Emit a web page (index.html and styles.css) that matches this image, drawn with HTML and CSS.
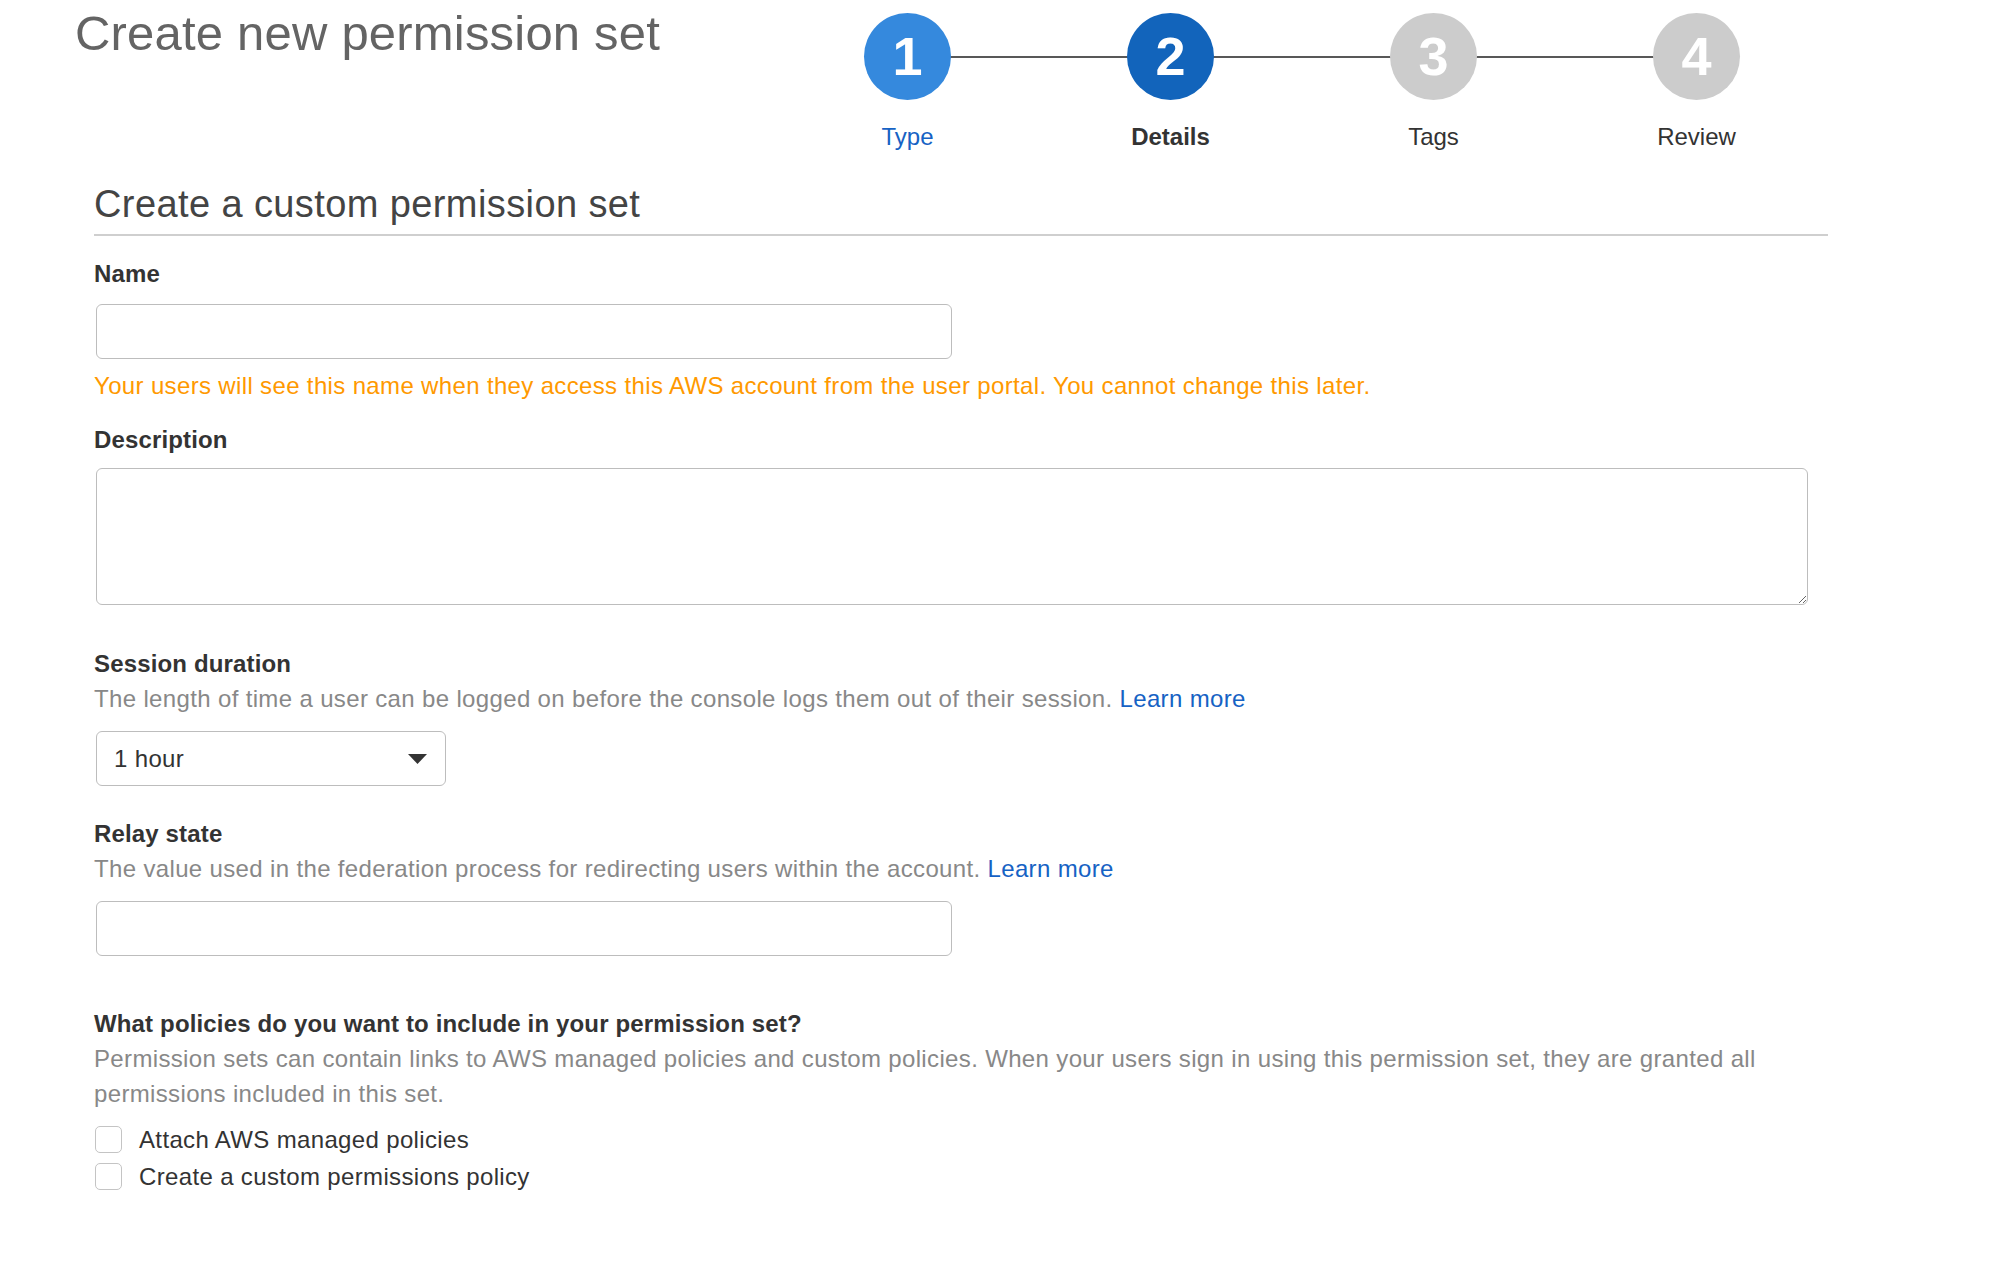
FILE: index.html
```html
<!DOCTYPE html>
<html lang="en">
<head>
    <meta charset="UTF-8">
    <meta name="viewport" content="width=device-width, initial-scale=1.0">
    <title>Create new permission set</title>
    <link rel="stylesheet" href="styles.css">
</head>
<body>
    <div class="page">
        <div class="header">
            <h1>Create new permission set</h1>
            <ol class="steps">
                <li class="step done">
                    <span class="circle">1</span>
                    <span class="step-label">Type</span>
                </li>
                <li class="step current">
                    <span class="circle">2</span>
                    <span class="step-label">Details</span>
                </li>
                <li class="step">
                    <span class="circle">3</span>
                    <span class="step-label">Tags</span>
                </li>
                <li class="step">
                    <span class="circle">4</span>
                    <span class="step-label">Review</span>
                </li>
            </ol>
        </div>

        <h2>Create a custom permission set</h2>

        <div class="field first">
            <label for="name">Name</label>
            <input type="text" id="name" class="text-input">
            <div class="warning">Your users will see this name when they access this AWS account from the user portal. You cannot change this later.</div>
        </div>

        <div class="field description">
            <label for="description">Description</label>
            <textarea id="description"></textarea>
        </div>

        <div class="field session">
            <label>Session duration</label>
            <div class="hint">The length of time a user can be logged on before the console logs them out of their session. <a href="#">Learn more</a></div>
            <div class="select">
                <span>1 hour</span>
                <svg class="caret" width="19" height="10" viewBox="0 0 19 10"><path d="M0 0h19L9.5 10z" fill="#333"/></svg>
            </div>
        </div>

        <div class="field relay">
            <label for="relay">Relay state</label>
            <div class="hint">The value used in the federation process for redirecting users within the account. <a href="#">Learn more</a></div>
            <input type="text" id="relay" class="text-input">
        </div>

        <div class="field policies">
            <label>What policies do you want to include in your permission set?</label>
            <div class="hint">Permission sets can contain links to AWS managed policies and custom policies. When your users sign in using this permission set, they are granted all permissions included in this set.</div>
            <div class="checks">
                <label class="check"><input type="checkbox"> Attach AWS managed policies</label>
                <label class="check"><input type="checkbox"> Create a custom permissions policy</label>
            </div>
        </div>
    </div>
</body>
</html>
```

FILE: styles.css
```css
body {
    margin: 0;
    font-family: 'Helvetica Neue', 'Liberation Sans', Arial, sans-serif;
    font-size: 24px;
    line-height: 35px;
    letter-spacing: 0.35px;
    color: #333;
    background-color: white;
}
.page {
    width: 1734px;
    margin-left: 94px;
}
.header {
    display: flex;
    justify-content: space-between;
    align-items: flex-start;
}
h1 {
    margin: 4px 0 0 -19px;
    font-size: 49px;
    font-weight: normal;
    line-height: 1.2;
    letter-spacing: 0.2px;
    color: #646464;
}
.steps {
    display: flex;
    margin: 13px 0 0;
    padding: 0;
    list-style: none;
    letter-spacing: 0;
}
.step {
    position: relative;
    width: 263px;
    display: flex;
    flex-direction: column;
    align-items: center;
}
.step:not(:last-child)::after {
    content: '';
    position: absolute;
    top: 43px;
    left: 50%;
    width: 100%;
    height: 2px;
    background-color: #585858;
}
.circle {
    position: relative;
    z-index: 1;
    width: 87px;
    height: 87px;
    border-radius: 50%;
    background-color: #cccccc;
    color: white;
    font-size: 54px;
    font-weight: bold;
    line-height: 87px;
    text-align: center;
}
.step.done .circle {
    background-color: #3589dd;
}
.step.current .circle {
    background-color: #1264bb;
}
.step-label {
    margin-top: 19px;
    color: #333;
}
.step.done .step-label {
    color: #1662c4;
}
.step.current .step-label {
    font-weight: bold;
}
h2 {
    margin: 27px 0 0;
    padding-bottom: 7px;
    font-size: 38px;
    font-weight: normal;
    line-height: 46px;
    letter-spacing: 0.4px;
    color: #444;
    border-bottom: 2px solid #cfcfcf;
}
.field > label {
    display: block;
    font-weight: bold;
    letter-spacing: 0.15px;
    color: #333;
}
.field.first {
    margin-top: 20px;
}
.field.description {
    margin-top: 19px;
}
.field.session {
    margin-top: 41px;
}
.field.relay {
    margin-top: 30px;
}
.field.policies {
    margin-top: 50px;
}
.text-input,
textarea,
.select {
    box-sizing: border-box;
    display: block;
    margin-left: 2px;
    border: 1px solid #bdbdbd;
    border-radius: 6px;
    background-color: white;
    font: inherit;
    color: #333;
}
.text-input {
    width: 856px;
    height: 55px;
    margin-top: 13px;
    padding: 0 16px;
}
.relay .text-input {
    margin-top: 15px;
}
textarea {
    width: 1712px;
    height: 137px;
    margin-top: 11px;
    padding: 10px 16px;
    resize: vertical;
}
.warning {
    margin-top: 9px;
    color: #ff9900;
}
.hint {
    color: #888;
}
.hint a {
    color: #1662c4;
    text-decoration: none;
}
.select {
    width: 350px;
    height: 55px;
    margin-top: 15px;
    padding: 0 18px 0 17px;
    display: flex;
    align-items: center;
    justify-content: space-between;
}
.checks {
    margin-top: 11px;
    display: flex;
    flex-direction: column;
    gap: 2px;
}
.check {
    display: flex;
    align-items: center;
    gap: 17px;
    height: 35px;
    color: #333;
}
.check input {
    appearance: none;
    -webkit-appearance: none;
    box-sizing: border-box;
    width: 27px;
    height: 27px;
    margin: 0 0 0 1px;
    border: 1px solid #c4c4c4;
    border-radius: 5px;
    background-color: white;
}
```
